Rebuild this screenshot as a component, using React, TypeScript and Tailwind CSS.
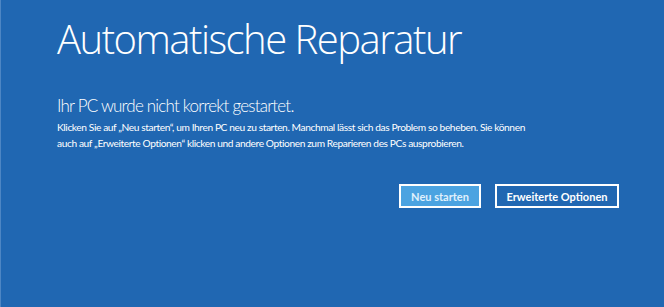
export default function App() {
  return (
    <div className="w-[664px] h-[307px] bg-[#2067b2] border-l border-[#4d86c4] text-white font-['Open_Sans',sans-serif] overflow-hidden">
      <div className="pl-[56px] pr-[45px] pt-[11px]">
        <h1 className="text-[40px] font-light leading-[56px] tracking-[-1.5px]">Automatische Reparatur</h1>
        <h2 className="mt-[27px] font-['Lato',sans-serif] text-[17px] font-light leading-[24px] tracking-[-0.8px]">
          Ihr PC wurde nicht korrekt gestartet.
        </h2>
        <p className="mt-[1px] w-[470px] font-['Lato',sans-serif] text-[10.2px] leading-[16px] tracking-[-0.4px]">
          Klicken Sie auf „Neu starten“, um Ihren PC neu zu starten. Manchmal lässt sich das Problem so beheben. Sie können auch auf „Erweiterte Optionen“ klicken und andere Optionen zum Reparieren des PCs ausprobieren.
        </p>
        <div className="mt-[33px] flex justify-end gap-[14px]">
          <button className="w-[82px] h-[24px] bg-[#4ba3e1] border-2 border-white text-[#e1f1fc] font-['Lato',sans-serif] text-[11px] font-bold leading-none">
            Neu starten
          </button>
          <button className="w-[124px] h-[24px] bg-[#2067b2] border-2 border-white text-white font-['Lato',sans-serif] text-[11px] font-bold leading-none">
            Erweiterte Optionen
          </button>
        </div>
      </div>
    </div>
  );
}
